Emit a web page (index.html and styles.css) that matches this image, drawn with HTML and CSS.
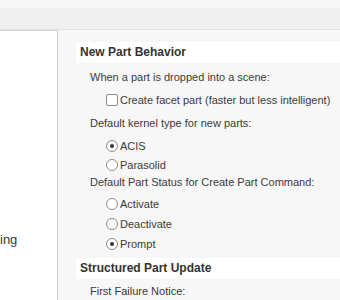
FILE: index.html
```html
<!DOCTYPE html>
<html lang="en">
<head>
    <meta charset="UTF-8">
    <title>Options - Part</title>
    <link rel="stylesheet" href="styles.css">
</head>
<body>
    <div class="topbar"></div>
    <div class="main">
        <div class="sidebar">
            <div class="nav-item nav-gap"></div>
            <div class="nav-item">ing</div>
        </div>
        <div class="content">
            <div class="section-title">New Part Behavior</div>
            <div class="label first">When a part is dropped into a scene:</div>
            <div class="options">
                <div class="option"><span class="check"></span>Create facet part (faster but less intelligent)</div>
            </div>
            <div class="label spaced">Default kernel type for new parts:</div>
            <div class="options compact">
                <div class="option"><span class="radio on"></span>ACIS</div>
                <div class="option"><span class="radio"></span>Parasolid</div>
            </div>
            <div class="label short">Default Part Status for Create Part Command:</div>
            <div class="options">
                <div class="option"><span class="radio"></span>Activate</div>
                <div class="option"><span class="radio"></span>Deactivate</div>
                <div class="option"><span class="radio on"></span>Prompt</div>
            </div>
            <div class="section-title lower">Structured Part Update</div>
            <div class="label near">First Failure Notice:</div>
        </div>
    </div>
</body>
</html>
```

FILE: styles.css
```css
body {
    margin: 0;
    width: 340px;
    height: 300px;
    overflow: hidden;
    font-family: "Liberation Sans", Arial, sans-serif;
    font-size: 11px;
    color: #3a3a3a;
    background-color: #f7f7f7;
}

.topbar {
    height: 29px;
    background: linear-gradient(#f6f6f6 8px, #efefef 8px);
    border-bottom: 1px solid #e2e2e2;
}

.main {
    display: flex;
    height: 270px;
}

.sidebar {
    width: 57px;
    background-color: #ffffff;
    border-top: 1px solid #d4d4d4;
    border-right: 1px solid #cdcdcd;
    overflow: hidden;
}

.nav-item {
    height: 20px;
    line-height: 20px;
    font-size: 13px;
    white-space: nowrap;
}

.nav-gap {
    height: 199px;
}

.content {
    flex: 1;
    padding-left: 18px;
    padding-top: 12px;
}

.section-title {
    height: 21px;
    line-height: 21px;
    padding-left: 4px;
    background-color: #ffffff;
    font-size: 12px;
    font-weight: bold;
    color: #333333;
}

.section-title.lower {
    margin-top: 4px;
}

.label {
    height: 20px;
    line-height: 20px;
    padding-left: 14px;
}

.label.first {
    margin-top: 4px;
}

.label.spaced {
    margin-top: 3px;
}

.label.short {
    height: 17px;
    line-height: 17px;
}

.label.near {
    margin-top: 2px;
}

.options {
    padding-top: 3px;
}

.option {
    display: flex;
    align-items: center;
    height: 20px;
    padding-left: 30px;
    white-space: nowrap;
}

.options.compact .option {
    height: 19px;
}

.check,
.radio {
    box-sizing: border-box;
    width: 12px;
    height: 12px;
    margin-right: 2px;
    background-color: #ffffff;
    border: 1px solid #8c8c8c;
}

.check {
    border-radius: 2px;
}

.radio {
    border-radius: 50%;
    display: flex;
    align-items: center;
    justify-content: center;
}

.radio.on::after {
    content: "";
    width: 4px;
    height: 4px;
    border-radius: 50%;
    background-color: #333333;
}
```
